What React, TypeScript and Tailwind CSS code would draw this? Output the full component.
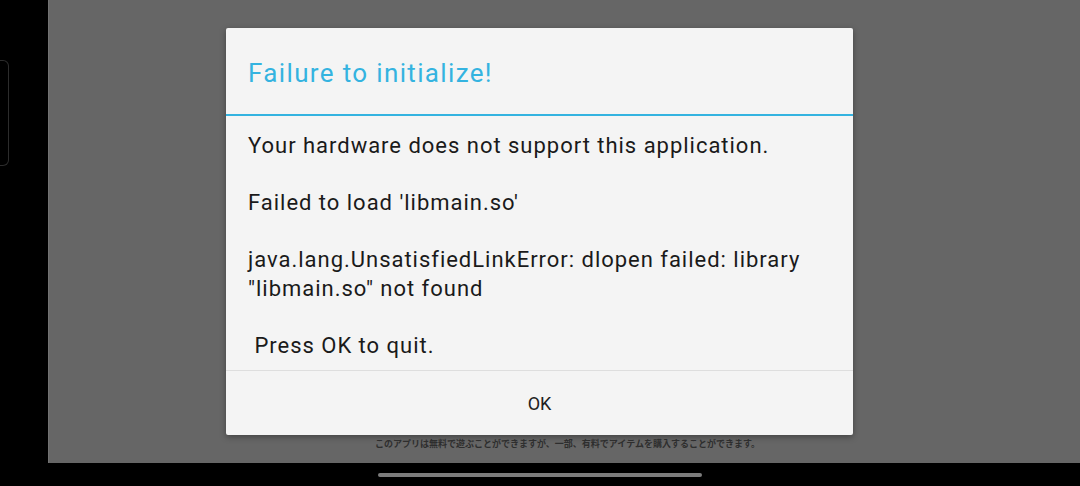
export default function App() {
  const font = { fontFamily: "Roboto, 'Noto Sans', sans-serif" };

  return (
    <div className="w-[1080px] h-[486px] bg-black flex flex-col overflow-hidden" style={font}>
      <div className="flex h-[463px]">
        {/* left cutout strip */}
        <div className="w-[48px] shrink-0 bg-black">
          <div className="mt-[60px] w-[9px] h-[106px] rounded-r-[6px] border border-l-0 border-[#2c2c2c]" />
        </div>

        {/* dimmed app screen */}
        <div className="flex-1 bg-[#666666] border-l border-[#727272] flex flex-col">
          <div className="mt-[28px] ml-[177px] w-[627px] h-[407px] bg-[#f4f4f4] rounded-[2px] shadow-[0_2px_6px_rgba(0,0,0,0.35)] flex flex-col">
            <div className="h-[86px] flex items-center pl-[22px] pt-[4px]">
              <h1 className="text-[26px] leading-none tracking-[1.35px] text-[#34b3e0]">Failure to initialize!</h1>
            </div>
            <div className="h-[2px] bg-[#34b3e0]" />
            <div className="flex-1 pt-[16px] pl-[22px] pr-[10px] text-[22px] leading-[28.5px] tracking-[0.98px] text-[#1a1a1a]">
              <p>Your hardware does not support this application.</p>
              <p>&nbsp;</p>
              <p>Failed to load 'libmain.so'</p>
              <p>&nbsp;</p>
              <p className="whitespace-nowrap">java.lang.UnsatisfiedLinkError: dlopen failed: library</p>
              <p>"libmain.so" not found</p>
              <p>&nbsp;</p>
              <p className="whitespace-pre"> Press OK to quit.</p>
            </div>
            <div className="h-px bg-[#dedede]" />
            <button className="h-[64px] flex items-center justify-center text-[18px] text-[#202020]">
              OK
            </button>
          </div>
          <p
            className="mt-[3px] ml-[326px] text-[9px] leading-[12px] text-[#2e2e2e] font-bold whitespace-nowrap"
            style={{ fontFamily: "'Noto Sans CJK JP', sans-serif" }}
          >
            このアプリは無料で遊ぶことができますが、一部、有料でアイテムを購入することができます。
          </p>
        </div>
      </div>

      {/* navigation bar */}
      <div className="flex-1 flex items-start justify-center pt-[10px]">
        <div className="w-[324px] h-[4px] rounded-full bg-[#7c7c7c]" />
      </div>
    </div>
  );
}
